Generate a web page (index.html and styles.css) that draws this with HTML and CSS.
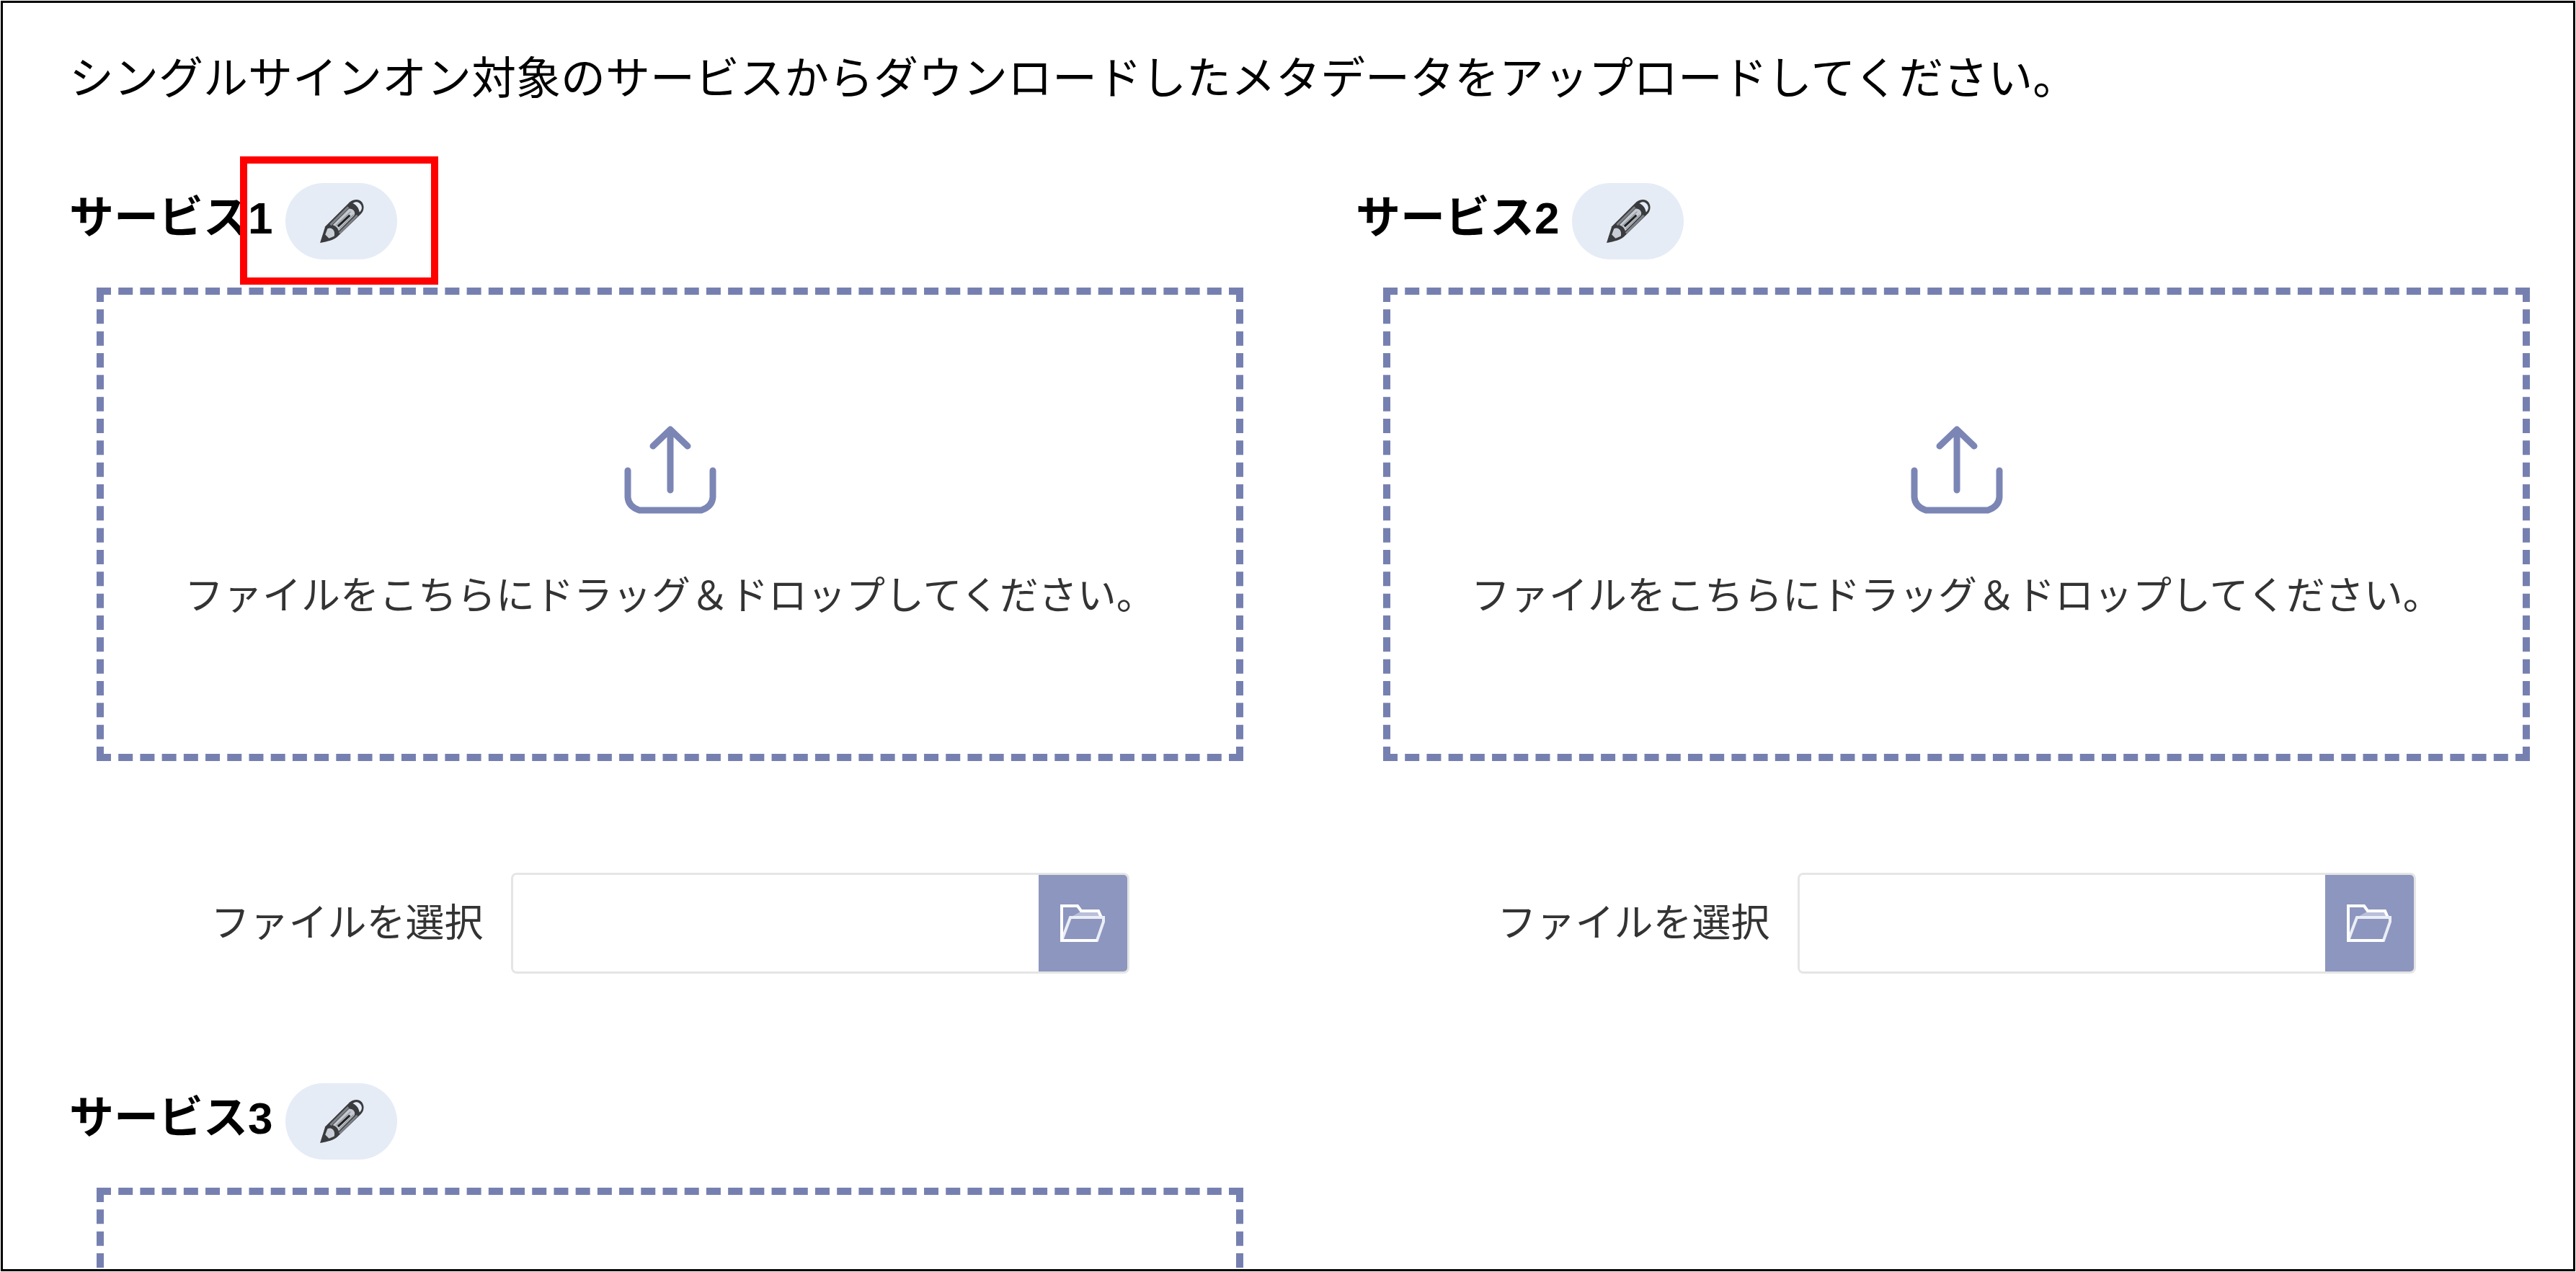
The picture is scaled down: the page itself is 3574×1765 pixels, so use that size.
FILE: index.html
```html
<!DOCTYPE html>
<html lang="ja">

<head>
    <meta charset="UTF-8">
    <meta name="viewport" content="width=device-width, initial-scale=1.0">
    <title>メタデータのアップロード</title>
    <link rel="stylesheet" href="styles.css">
</head>

<body>
    <!-- 共通アイコン -->
    <svg class="icon-defs" aria-hidden="true">
        <symbol id="icon-pencil" viewBox="0 0 60 60">
            <path d="M1 59 L8 37 L41 4 C47 0 53 0 57 4 C61 9 60 16 56 20 L24 51 C19 55 12 57 1 59 Z" fill="#3a3b3e"/>
            <path d="M45 6 C50 2 54 5 56 8 C58 12 57 15 54 18 C53 12 50 8 45 6 Z" fill="#e4ebf6"/>
            <path d="M8 48 L11 40 C17 37 22 43 20 50 L13 53 Z" fill="#c9cdd5"/>
            <path d="M15 35 L39 11 M27 46 L51 22" stroke="#7d8085" stroke-width="3" fill="none"/>
            <path d="M18 35 L40 13 C46 13 49 18 47 22 L26 43 C25 39 22 36 18 35 Z" fill="#c4c9d1"/>
            <path d="M22 36 L42 17 M27 40 L46 21" stroke="#8c9096" stroke-width="1" fill="none"/>
            <path d="M25 37 L41 22" stroke="#222" stroke-width="3"/>
        </symbol>
        <symbol id="icon-upload" viewBox="0 0 128 122">
            <path d="M5 62 V99 Q6 112 21 117 H107 Q122 112 123 99 V62" fill="none" stroke="#7b86b5" stroke-width="9" stroke-linecap="round" stroke-linejoin="round"/>
            <path d="M64 6 V89 M40 28 L64 5 L88 28" fill="none" stroke="#7b86b5" stroke-width="9" stroke-linecap="round" stroke-linejoin="round"/>
        </symbol>
        <symbol id="icon-folder" viewBox="0 0 62 52">
            <path d="M28 10 H53 L57 18 H14 Z" fill="#b9bfda"/>
            <path d="M2 50 V2 H24 L29 9 H53 L57 18" fill="none" stroke="#fff" stroke-width="4"/>
            <path d="M2 50 L14 18 H60 V24 L51 50 Z" fill="none" stroke="#eceef6" stroke-width="4"/>
            <path d="M2 2 V50 H51" fill="none" stroke="#fff" stroke-width="4"/>
        </symbol>
    </svg>

    <main class="page">
        <p class="lead">シングルサインオン対象のサービスからダウンロードしたメタデータをアップロードしてください。</p>

        <div class="services">
            <!-- サービス1 -->
            <section class="service">
                <div class="service-head">
                    <h2>サービス1</h2>
                    <button type="button" class="edit-button" aria-label="サービス1の名前を編集"><svg><use href="#icon-pencil"/></svg></button>
                    <span class="highlight"></span>
                </div>
                <div class="drop-area">
                    <svg class="upload-icon" aria-hidden="true"><use href="#icon-upload"/></svg>
                    <p>ファイルをこちらにドラッグ＆ドロップしてください。</p>
                </div>
                <div class="file-row">
                    <label for="file1">ファイルを選択</label>
                    <div class="file-box">
                        <input type="text" id="file1">
                        <button type="button" aria-label="参照"><svg><use href="#icon-folder"/></svg></button>
                    </div>
                </div>
            </section>

            <!-- サービス2 -->
            <section class="service">
                <div class="service-head">
                    <h2>サービス2</h2>
                    <button type="button" class="edit-button" aria-label="サービス2の名前を編集"><svg><use href="#icon-pencil"/></svg></button>
                </div>
                <div class="drop-area">
                    <svg class="upload-icon" aria-hidden="true"><use href="#icon-upload"/></svg>
                    <p>ファイルをこちらにドラッグ＆ドロップしてください。</p>
                </div>
                <div class="file-row">
                    <label for="file2">ファイルを選択</label>
                    <div class="file-box">
                        <input type="text" id="file2">
                        <button type="button" aria-label="参照"><svg><use href="#icon-folder"/></svg></button>
                    </div>
                </div>
            </section>

            <!-- サービス3 -->
            <section class="service">
                <div class="service-head">
                    <h2>サービス3</h2>
                    <button type="button" class="edit-button" aria-label="サービス3の名前を編集"><svg><use href="#icon-pencil"/></svg></button>
                </div>
                <div class="drop-area"></div>
            </section>
        </div>
    </main>
</body>

</html>
```

FILE: styles.css
```css
* {
    box-sizing: border-box;
}

body {
    margin: 0;
    padding: 1px;
    height: 100vh;
    overflow: hidden;
    background: #fff;
    color: #000;
    font-family: "Liberation Sans", "Noto Sans CJK JP", sans-serif;
}

h2,
p {
    margin: 0;
}

.icon-defs {
    position: absolute;
    width: 0;
    height: 0;
}

.page {
    height: 100%;
    overflow: hidden;
    border: 3px solid #000;
    padding: 66px 24px 0 92px;
}

.lead {
    font-size: 62px;
    line-height: 80px;
}

.services {
    display: grid;
    grid-template-columns: 1fr 1fr;
    gap: 152px 120px;
    margin-top: 104px;
}

/* 見出し */
.service-head {
    position: relative;
    display: flex;
    align-items: flex-start;
    gap: 18px;
}

.service-head h2 {
    font-size: 62px;
    line-height: 98px;
}

.edit-button {
    display: flex;
    align-items: center;
    justify-content: center;
    width: 155px;
    height: 106px;
    padding: 0;
    border: none;
    border-radius: 53px;
    background: #e5ecf6;
    cursor: pointer;
}

.edit-button svg {
    width: 62px;
    height: 62px;
}

.highlight {
    position: absolute;
    top: -37px;
    left: 237px;
    width: 275px;
    height: 178px;
    border: 10px solid #f00;
    pointer-events: none;
}

/* ドロップエリア */
.drop-area {
    display: flex;
    flex-direction: column;
    align-items: center;
    justify-content: center;
    gap: 76px;
    height: 657px;
    margin: 39px 36px 0 38px;
    border: 10px dashed #7680b0;
    color: #333;
    font-size: 54px;
    line-height: 76px;
}

.upload-icon {
    width: 128px;
    height: 122px;
}

/* ファイル選択 */
.file-row {
    display: flex;
    align-items: center;
    justify-content: center;
    gap: 38px;
    margin: 155px 36px 0 38px;
    color: #333;
    font-size: 54px;
    line-height: 76px;
}

.file-box {
    display: flex;
    width: 858px;
    height: 140px;
    border: 3px solid #e5e5e5;
    border-radius: 8px;
    overflow: hidden;
}

.file-box input {
    flex: 1;
    min-width: 0;
    padding: 0 20px;
    border: none;
    outline: none;
    background: #fff;
    font: inherit;
}

.file-box button {
    display: flex;
    align-items: center;
    justify-content: center;
    width: 123px;
    padding: 0;
    border: none;
    background: #8d96be;
    cursor: pointer;
}

.file-box button svg {
    width: 62px;
    height: 52px;
}
```
